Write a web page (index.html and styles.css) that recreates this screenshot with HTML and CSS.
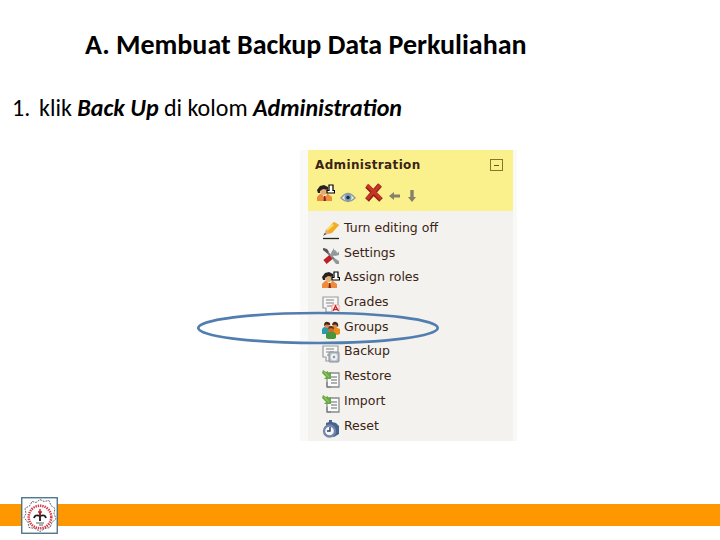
FILE: index.html
```
<!DOCTYPE html>
<html lang="id">
<head>
<meta charset="utf-8">
<title>Membuat Backup Data Perkuliahan</title>
<link rel="stylesheet" href="styles.css">
</head>
<body>
<svg class="defs" aria-hidden="true">
  <symbol id="roles" viewBox="0 0 18 18">
    <path d="M0 17v-4l3-3h8l4 3v4z" fill="#ec8c3c"/><path d="M5 10h5l-2 4z" fill="#fff0d8"/><path d="M7 12h1.5l.5 5H6.5z" fill="#8c2818"/>
    <ellipse cx="6.5" cy="7.5" rx="3.4" ry="3.6" fill="#e4ad78"/><path d="M0 6l3-4 4-1 4 2v3L6 5 3 7v2H1z" fill="#252220"/>
    <path d="M10 9V6.500h2V1h4v5.500h1.500V9z" fill="#fff" stroke="#000" stroke-width="1.2"/>
  </symbol>
  <symbol id="sheet" viewBox="0 0 18 18">
    <path d="M1 1h15v15H4V12H1z" fill="#f7f7f7" stroke="#999ca0" stroke-width="1.2"/><path d="M4 4h8M4 7h8M5 10h5" stroke="#aaa" stroke-width="1.3"/>
  </symbol>
  <symbol id="transfer" viewBox="0 0 18 18">
    <path d="M5 3h12v14H5z" fill="#fbfbfb" stroke="#8a8d8d" stroke-width="1.3"/><path d="M9 7h6M9 10h6M9 13h6" stroke="#656b6c" stroke-width="1.2"/>
    <path d="M5 12v5h4" fill="none" stroke="#777"/><path d="M1 0l3 2 2-1v2l3-1v7H2l2-2-4-4z" fill="#67a943"/><path d="M2 2l5 5" stroke="#8dc163" stroke-width="1.3"/>
  </symbol>
</svg>
<main class="slide">
  <h1>A. Membuat Backup Data Perkuliahan</h1>
  <p class="step"><span class="num">1.</span><span class="words">klik <b>Back Up</b> di kolom <b>Administration</b></span></p>
  <section class="panel">
    <header>
      <div class="heading"><h2>Administration</h2><span class="collapse"></span></div>
      <div class="tools">
        <svg class="t-role"><use href="#roles"/></svg>
        <svg class="t-eye" viewBox="0 0 16 12"><path d="M1 7Q8-2 15 7Q8 14 1 7z" fill="#edf3f4" stroke="#929b91" stroke-width="1.3"/><circle cx="8" cy="6.5" r="3.5" fill="#7799b5"/><circle cx="8" cy="6.5" r="1.7" fill="#172a42"/></svg>
        <svg class="t-x" viewBox="0 0 20 20"><path d="M3 3l14 14M16 2L3 17" stroke="#8e2015" stroke-width="5"/><path d="M3 2l14 14M16 2L3 16" stroke="#c73525" stroke-width="3.2"/></svg>
        <svg class="t-left" viewBox="0 0 12 10"><path d="M0 5l5-4v2.5h6v3H5V9z" fill="#85816a"/></svg>
        <svg class="t-down" viewBox="0 0 10 13"><path d="M3.3 0h3.4v7H9l-4 5-4-5h2.3z" fill="#85816a"/></svg>
      </div>
    </header>
    <ul>
      <li><svg viewBox="0 0 18 18"><path d="M1 16.5h16" stroke="#222" stroke-width="1.3"/><path d="M2 13l2-5 8-8 5 3-7 8z" fill="#f4ac20"/><path d="M5 8l8-7" stroke="#ffdc68" stroke-width="2"/><path d="M12 0l5 3-2 2-5-3z" fill="#edb02f"/><path d="M2 13l2-5 4 3z" fill="#d9b09b"/><path d="M1 14l2-3 1 1z" fill="#333"/></svg><span>Turn editing off</span></li>
      <li><svg viewBox="0 0 18 18"><path d="M2 2l12 12" stroke="#777" stroke-width="2"/><path d="M4 14L14 4" stroke="#979b9d" stroke-width="3.4"/><path d="M12 1v4l4 1 1-2v4l-4 1-4-3zM12 11l5 3v3h-3l-3-4z" fill="#92979a"/><path d="M3 15l6-5" stroke="#bd2024" stroke-width="5"/><path d="M1 1l4 1 2 3-2 1-4-3z" fill="#555"/></svg><span>Settings</span></li>
      <li><svg><use href="#roles"/></svg><span>Assign roles</span></li>
      <li><svg viewBox="0 0 18 18"><use href="#sheet" width="18" height="18"/><path d="M10 9h7v8h-7z" fill="#fff" stroke="#e4a0a0"/><path d="M11 15l2.5-5 3 5M12 13.5h4" fill="none" stroke="#c92525" stroke-width="1.4"/></svg><span>Grades</span></li>
      <li><svg viewBox="0 0 18 18"><path d="M0 13V8l2-2h5l1 7z" fill="#299bb1"/><path d="M10 7l3-1 5 2v5l-3 1-5-2z" fill="#ed8b17"/><circle cx="5" cy="4.5" r="2.6" fill="#d88a50"/><circle cx="13" cy="4.5" r="2.6" fill="#d88a50"/><path d="M2 5q0-5 4-4 3 1 2 3L4 3.5zM10 4q1-4 4-3 3 1 2 5l-2-2.500z" fill="#442719"/><circle cx="9" cy="9" r="3" fill="#c96e31"/><path d="M4 17v-4l2-2h6l2 2v4l-2 1H6z" fill="#48963b"/><path d="M6 8q1-4 3-3 3 0 3 3L9 7z" fill="#653315"/></svg><span>Groups</span></li>
      <li><svg viewBox="0 0 18 18"><use href="#sheet" width="18" height="18"/><rect x="7" y="7" width="10" height="10" rx="1" fill="#b9bec4" stroke="#858e96"/><circle cx="12" cy="12" r="3.4" fill="#edf0f2"/><circle cx="12" cy="12" r="1.2" fill="#8994a2"/></svg><span>Backup</span></li>
      <li><svg><use href="#transfer"/></svg><span>Restore</span></li>
      <li><svg><use href="#transfer"/></svg><span>Import</span></li>
      <li><svg viewBox="0 0 18 18"><path d="M4 3l3-1V0h3v2l4 1 3 3v8l-5 3-8-3z" fill="#45648f"/><circle cx="7.500" cy="11" r="5.500" fill="#f4f6f8" stroke="#7584ad" stroke-width="2.3"/><path d="M8 7v4H5" fill="none" stroke="#303f60" stroke-width="1.4"/></svg><span>Reset</span></li>
    </ul>
  </section>
  <svg class="ring" viewBox="0 0 242 34"><ellipse cx="121" cy="17" rx="119.7" ry="15" fill="none" stroke="#527daf" stroke-width="2.7"/></svg>
  <footer>
    <svg class="logo" viewBox="0 0 37 37">
      <rect x=".75" y=".75" width="35.5" height="35.5" fill="#fff" stroke="#426c83" stroke-width="1.3"/>
      <path d="M19 2.500l4 2 5-1 2 5 4 3-1 5 2 5-4 4-2 5-5 1-5 3-5-3-6-1-1-5-4-5 2-4-1-5 5-3 2-4 4 1z" fill="none" stroke="#3d424f" stroke-width=".8" stroke-dasharray="2 1"/>
      <circle cx="19" cy="20" r="11.3" fill="none" stroke="#d53b48" stroke-width="2.5" stroke-dasharray="1.4 .9"/>
      <path d="M13 21q1-4 6-2q5-2 6 2M19 15v9" fill="none" stroke="#161719" stroke-width="1.8"/><path d="M19 12v7M17 15h4" stroke="#c3202c" stroke-width="1.4"/><path d="M15 26h8M18 28h4" stroke="#596154"/>
    </svg>
  </footer>
</main>
</body>
</html>
```
FILE: styles.css
```
* { box-sizing: border-box; }
body { margin: 0; background: #fff; }
.defs { position: absolute; width: 0; height: 0; }
.slide { position: relative; width: 720px; height: 540px; overflow: hidden; display: flex; flex-direction: column; color: #000; font-family: Carlito, Lato, sans-serif; }
h1 { margin: 29px 0 0 85px; height: 32px; font-size: 28px; line-height: 32px; white-space: nowrap; font-variant-ligatures: none; }
.step { margin: 33px 0 0 12px; height: 28px; display: flex; font-size: 24px; line-height: 28px; white-space: nowrap; }
.num { width: 27px; }
.step b { font-style: italic; }
.panel { margin: 28px 0 0 300px; width: 217px; height: 291px; border: solid #f9f9f8; border-width: 0 4px 0 8px; background: #f3f2ee; font-family: "DejaVu Sans", sans-serif; color: #3b2415; }
header { height: 61px; background: #fbf18c; padding: 7px 10px 0 7px; }
.heading { display: flex; justify-content: space-between; height: 17px; }
h2 { margin: 0; font-size: 12px; line-height: 16px; letter-spacing: .35px; }
.collapse { width: 13px; height: 12px; margin-top: 2px; border: 1px solid #85762c; display: grid; place-items: center; }
.collapse::after { content: ""; width: 5px; height: 1px; background: #66551b; }
.tools { display: flex; padding: 9px 0 0 2px; height: 31px; }
.t-role { width: 18px; height: 18px; margin-top: 1px; }
.t-eye { width: 16px; height: 12px; margin: 8px 0 0 5px; }
.t-x { width: 20px; height: 20px; margin: 0 0 0 8px; }
.t-left { width: 12px; height: 10px; margin: 8px 0 0 5px; }
.t-down { width: 10px; height: 13px; margin: 7px 0 0 6px; }
ul { margin: 0; padding: 6px 0 0 14px; list-style: none; }
li { height: 24.7px; display: flex; align-items: flex-start; gap: 4px; font-size: 12.5px; line-height: 22px; white-space: nowrap; }
li svg { width: 18px; height: 18px; margin-top: 5px; }
.ring { position: absolute; left: 197px; top: 311px; width: 242px; height: 34px; }
footer { margin-top: auto; margin-bottom: 14px; height: 22px; background: #ff9800; padding-left: 21px; display: flex; align-items: center; }
.logo { width: 37px; height: 37px; flex: none; }
```
